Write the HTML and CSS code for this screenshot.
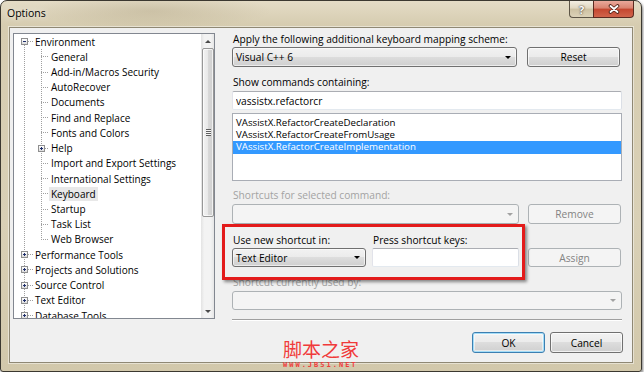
FILE: index.html
```html
<!DOCTYPE html>
<html lang="en">
<head>
    <meta charset="UTF-8">
    <meta name="viewport" content="width=device-width, initial-scale=1.0">
    <title>Options</title>
    <link rel="stylesheet" href="styles.css">
</head>
<body>
    <div class="window">
        <div class="titlebar">
            <span class="title">Options</span>
            <div class="caption-buttons">
                <div class="cap-btn cap-help">?</div>
                <div class="cap-btn cap-close">
                    <svg width="12" height="10" viewBox="0 0 12 10">
                        <path d="M2.5 2 L9.5 8 M9.5 2 L2.5 8" stroke="#4e2016" stroke-width="3.6" stroke-linecap="round"/>
                        <path d="M2.5 2 L9.5 8 M9.5 2 L2.5 8" stroke="#fff" stroke-width="1.9" stroke-linecap="round"/>
                    </svg>
                </div>
            </div>
        </div>
        <div class="client">
            <div class="tree">
                <ul class="tree-root">
                    <li>
                        <div class="row lvl0"><span class="exp minus"></span><span class="link"></span><span class="text">Environment</span></div>
                        <ul class="children">
                            <li class="row lvl1"><span class="link"></span><span class="text">General</span></li>
                            <li class="row lvl1"><span class="link"></span><span class="text">Add-in/Macros Security</span></li>
                            <li class="row lvl1"><span class="link"></span><span class="text">AutoRecover</span></li>
                            <li class="row lvl1"><span class="link"></span><span class="text">Documents</span></li>
                            <li class="row lvl1"><span class="link"></span><span class="text">Find and Replace</span></li>
                            <li class="row lvl1"><span class="link"></span><span class="text">Fonts and Colors</span></li>
                            <li class="row lvl1 expandable"><span class="exp plus"></span><span class="link"></span><span class="text">Help</span></li>
                            <li class="row lvl1"><span class="link"></span><span class="text">Import and Export Settings</span></li>
                            <li class="row lvl1"><span class="link"></span><span class="text">International Settings</span></li>
                            <li class="row lvl1 selected"><span class="link"></span><span class="text">Keyboard</span></li>
                            <li class="row lvl1"><span class="link"></span><span class="text">Startup</span></li>
                            <li class="row lvl1"><span class="link"></span><span class="text">Task List</span></li>
                            <li class="row lvl1"><span class="link"></span><span class="text">Web Browser</span></li>
                        </ul>
                    </li>
                    <li class="row lvl0"><span class="exp plus"></span><span class="link"></span><span class="text">Performance Tools</span></li>
                    <li class="row lvl0"><span class="exp plus"></span><span class="link"></span><span class="text">Projects and Solutions</span></li>
                    <li class="row lvl0"><span class="exp plus"></span><span class="link"></span><span class="text">Source Control</span></li>
                    <li class="row lvl0"><span class="exp plus"></span><span class="link"></span><span class="text">Text Editor</span></li>
                    <li class="row lvl0"><span class="exp plus"></span><span class="link"></span><span class="text">Database Tools</span></li>
                </ul>
                <div class="scrollbar">
                    <div class="sb-btn"><span class="sb-up"></span></div>
                    <div class="sb-thumb"><span class="grip"></span></div>
                    <div class="sb-track"></div>
                    <div class="sb-btn"><span class="sb-down"></span></div>
                </div>
            </div>

            <div class="panel">
                <div class="label">Apply the following additional keyboard mapping scheme:</div>
                <div class="scheme-row">
                    <div class="combo"><span>Visual C++ 6</span><span class="arrow"></span></div>
                    <button class="btn">Reset</button>
                </div>

                <div class="label mt-9">Show commands containing:</div>
                <input class="textbox search" type="text" value="vassistx.refactorcr">
                <ul class="listbox">
                    <li>VAssistX.RefactorCreateDeclaration</li>
                    <li>VAssistX.RefactorCreateFromUsage</li>
                    <li class="selected">VAssistX.RefactorCreateImplementation</li>
                </ul>

                <div class="label disabled mt-8">Shortcuts for selected command:</div>
                <div class="command-row">
                    <div class="combo disabled"><span></span><span class="arrow"></span></div>
                    <button class="btn" disabled>Remove</button>
                </div>

                <div class="shortcut-labels">
                    <div class="label first">Use new shortcut in:</div>
                    <div class="label">Press shortcut keys:</div>
                </div>
                <div class="shortcut-row">
                    <div class="combo scope"><span>Text Editor</span><span class="arrow"></span></div>
                    <input class="textbox keys" type="text" value="">
                    <button class="btn assign" disabled>Assign</button>
                </div>

                <div class="label disabled mt-9">Shortcut currently used by:</div>
                <div class="combo disabled used-by"><span></span><span class="arrow"></span></div>

                <div class="separator"></div>
                <div class="dialog-buttons">
                    <button class="btn default">OK</button>
                    <button class="btn">Cancel</button>
                </div>
            </div>
        </div>

        <div class="callout"></div>
        <div class="watermark">
            <div class="wm-name">脚本之家</div>
            <div class="wm-url">WWW.JB51.NET</div>
        </div>
    </div>
</body>
</html>
```

FILE: styles.css
```css
* {
    box-sizing: border-box;
}
body {
    margin: 0;
    background: #fff;
    font-family: "Open Sans", "Liberation Sans", sans-serif;
    font-size: 10.2px;
    color: #000;
}

/* window frame */
.window {
    position: relative;
    width: 642px;
    height: 372px;
    border: 1px solid #3b3830;
    border-radius: 7px 7px 3px 3px;
    background:
        radial-gradient(ellipse 120px 18px at 150px 10px, rgba(150, 135, 100, 0.25), transparent),
        linear-gradient(to bottom, #e4dcc6 0, #d6ccb0 24px, #d9d0b6 60%, #d2c8ab 100%);
    box-shadow: 1px 2px 3px rgba(0, 0, 0, 0.5);
}
.titlebar {
    display: flex;
    height: 26px;
}
.title {
    padding: 6px 0 0 6px;
    font-size: 10.5px;
    line-height: 13px;
    text-shadow: 0 0 6px rgba(255, 255, 255, 0.9);
}
.caption-buttons {
    display: flex;
    height: 17px;
    margin: 0 7px 0 auto;
}
.cap-btn {
    display: flex;
    align-items: center;
    justify-content: center;
    border: 1px solid #5d5546;
    border-top: none;
}
.cap-help {
    width: 24px;
    border-right: none;
    border-radius: 0 0 0 4px;
    background: linear-gradient(#f3eee2, #e0d7c0 45%, #cdc1a2 50%, #dcd2b8);
    color: #fff;
    font-weight: bold;
    font-size: 11px;
    text-shadow: 0 0 2px #4a4236, 0 0 1px #4a4236;
}
.cap-close {
    width: 41px;
    border-color: #5b2a20;
    border-radius: 0 0 4px 0;
    background: linear-gradient(#eaa99b, #d9826f 45%, #c4462f 50%, #d1644b);
}

.client {
    display: flex;
    align-items: flex-start;
    height: 336px;
    margin: 0 8px;
    padding: 5px 0 0 3px;
    border: 1px solid #8f8874;
    background: #f0f0f0;
    box-shadow: 0 0 0 1px rgba(255, 255, 255, 0.45);
}

/* tree view */
.tree {
    display: flex;
    width: 202px;
    height: 286px;
    border: 1px solid #828790;
    background: #fff;
    font-size: 10px;
}
.tree ul {
    margin: 0;
    padding: 0;
    list-style: none;
}
.tree-root {
    position: relative;
    flex: 1;
    overflow: hidden;
}
.tree-root::before,
.children::before {
    content: "";
    position: absolute;
    border-left: 1px dotted #a0a0a0;
}
.tree-root::before {
    left: 10px;
    top: 8px;
    bottom: 0;
}
.children {
    position: relative;
}
.children::before {
    left: 27px;
    top: 0;
    bottom: 7px;
}
.row {
    display: flex;
    align-items: center;
    height: 15.22px;
    white-space: nowrap;
}
.lvl0 {
    padding-left: 7px;
}
.lvl1 {
    padding-left: 27px;
}
.lvl1.expandable {
    padding-left: 24px;
}
.exp {
    position: relative;
    flex: none;
    width: 7px;
    height: 7px;
    border: 1px solid #8f8f8f;
}
.exp.minus {
    background:
        linear-gradient(#1f2f6b, #1f2f6b) center / 3px 1px no-repeat,
        linear-gradient(#fff, #dcdcdc);
}
.exp.plus {
    background:
        linear-gradient(#1f2f6b, #1f2f6b) center / 3px 1px no-repeat,
        linear-gradient(#1f2f6b, #1f2f6b) center / 1px 3px no-repeat,
        linear-gradient(#fff, #dcdcdc);
}
.link {
    flex: none;
    border-top: 1px dotted #a0a0a0;
}
.lvl0 .link {
    width: 5px;
}
.lvl1 .link {
    width: 7px;
}
.lvl1.expandable .link {
    width: 3px;
}
.text {
    padding: 0 2px;
    line-height: 14px;
}
.lvl1 .text {
    margin-left: 1px;
}
.selected .text {
    background: #e8e8e8;
}

.scrollbar {
    display: flex;
    flex-direction: column;
    width: 13px;
    background: linear-gradient(90deg, #e3e3e3, #f3f3f3 25%, #f3f3f3 75%, #e6e6e6);
}
.sb-btn {
    display: flex;
    align-items: center;
    justify-content: center;
    height: 14px;
}
.sb-up,
.sb-down {
    border-left: 3px solid transparent;
    border-right: 3px solid transparent;
}
.sb-up {
    border-bottom: 3px solid #4a4a4a;
}
.sb-down {
    border-top: 3px solid #4a4a4a;
}
.sb-thumb {
    display: flex;
    align-items: center;
    justify-content: center;
    height: 169px;
    margin: 0 0 0 1px;
    border: 1px solid #979797;
    border-radius: 2px;
    background: linear-gradient(90deg, #f3f3f3, #e8e8e8 50%, #d9d9d9 51%, #cfcfcf);
    box-shadow: inset 0 0 0 1px rgba(255, 255, 255, 0.7);
}
.grip {
    width: 5px;
    height: 7px;
    background: repeating-linear-gradient(#5e5e5e 0 1px, #f6f6f6 1px 2px);
}
.sb-track {
    flex: 1;
}

/* right side */
.panel {
    display: flex;
    flex-direction: column;
    width: 390px;
    margin-left: 17px;
}
.label {
    height: 13px;
    line-height: 13px;
    padding-left: 1px;
    white-space: nowrap;
}
.label.disabled {
    color: #a3a3a3;
}
.mt-8 {
    margin-top: 8px;
}
.mt-9 {
    margin-top: 9px;
}
.scheme-row {
    display: grid;
    grid-template-columns: 285px 93px;
    column-gap: 10px;
    height: 20px;
    margin-top: 1px;
}
.command-row {
    display: grid;
    grid-template-columns: 287px 93px;
    column-gap: 9px;
    height: 20px;
    margin-top: 2px;
}
.shortcut-labels {
    display: flex;
    margin-top: 10px;
}
.shortcut-labels .first {
    width: 140px;
}
.shortcut-row {
    display: flex;
    height: 19px;
    margin-top: 1px;
}
.combo {
    display: flex;
    align-items: center;
    justify-content: space-between;
    padding: 0 5px 0 3px;
    border: 1px solid #707070;
    border-radius: 3px;
    background: linear-gradient(#f2f2f2, #ebebeb 50%, #dddddd 50%, #cfcfcf);
    box-shadow: inset 0 0 0 1px rgba(255, 255, 255, 0.6);
    white-space: nowrap;
}
.arrow {
    border-left: 3px solid transparent;
    border-right: 3px solid transparent;
    border-top: 3px solid #000;
}
.combo.disabled {
    border-color: #adb2b5;
    background: #f4f4f4;
    box-shadow: none;
}
.combo.disabled .arrow {
    border-top-color: #a2a2a2;
}
.combo.scope {
    width: 134px;
}
.combo.used-by {
    height: 19px;
    margin-top: 2px;
}
.btn {
    padding: 0;
    font: inherit;
    color: #000;
    border: 1px solid #707070;
    border-radius: 3px;
    background: linear-gradient(#f2f2f2, #ebebeb 50%, #dddddd 50%, #cfcfcf);
    box-shadow: inset 0 0 0 1px rgba(255, 255, 255, 0.7);
}
.btn:disabled {
    color: #838383;
    border-color: #adb2b5;
    background: #f4f4f4;
    box-shadow: none;
}
.btn.default {
    border-color: #3c7fb1;
    box-shadow: inset 0 0 0 1px #a4ddf8, inset 0 0 0 2px rgba(255, 255, 255, 0.5);
}
.btn.assign {
    width: 93px;
    margin-left: 9px;
}
.textbox {
    height: 19px;
    padding: 0 3px;
    font: inherit;
    color: #000;
    border: 1px solid;
    border-color: #abadb3 #dbdfe6 #e3e9ef #e2e3ea;
    border-radius: 2px;
    background: #fff;
    outline: none;
}
.textbox.search {
    margin-top: 2px;
}
.textbox.keys {
    width: 147px;
    margin-left: 6px;
}
.listbox {
    height: 68px;
    margin: 3px 0 0;
    padding: 2.5px 0 0;
    list-style: none;
    border: 1px solid #a9adb5;
    background: #fff;
    font-size: 9.7px;
}
.listbox li {
    height: 12.4px;
    line-height: 12.4px;
    padding-left: 3px;
    white-space: nowrap;
}
.listbox .selected {
    background: #3399ff;
    color: #fff;
}
.separator {
    height: 2px;
    margin-top: 9px;
    border-top: 1px solid #a0a0a0;
    border-bottom: 1px solid #fff;
}
.dialog-buttons {
    display: flex;
    justify-content: flex-end;
    gap: 5px;
    margin: 11px -1px 0 0;
}
.dialog-buttons .btn {
    width: 73px;
    height: 21px;
}

/* annotations drawn over the screenshot */
.callout {
    position: absolute;
    left: 221px;
    top: 223px;
    width: 303px;
    height: 56px;
    border: 3px solid #e31b1b;
    box-shadow: 2px 2px 3px rgba(0, 0, 0, 0.45);
}
.watermark {
    position: absolute;
    left: 282px;
    top: 338px;
    color: #f03a3a;
}
.wm-name {
    font-family: "Noto Sans CJK SC", sans-serif;
    font-size: 19px;
    line-height: 20px;
}
.wm-url {
    margin-top: 3px;
    font-family: "DejaVu Sans Mono", monospace;
    font-size: 7px;
    font-weight: bold;
    line-height: 7px;
    letter-spacing: 2px;
}
```
